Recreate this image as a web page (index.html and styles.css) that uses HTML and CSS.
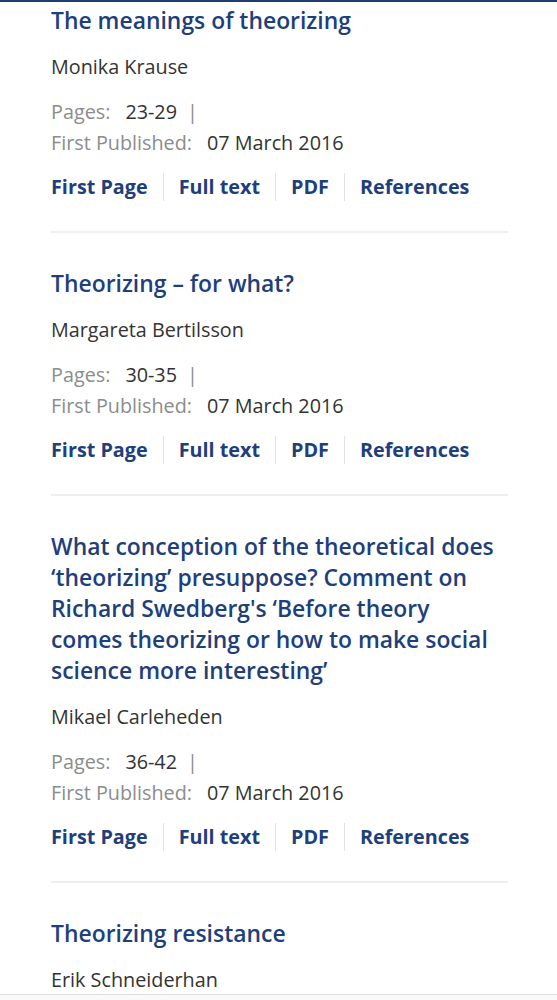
FILE: index.html
```html
<!DOCTYPE html>
<html>
<head>
<meta charset="utf-8">
<link rel="stylesheet" href="styles.css">
</head>
<body>
<div class="topbar"></div>
<main class="list">
  <article class="item">
    <h2 class="title">The meanings of theorizing</h2>
    <div class="author">Monika Krause</div>
    <div class="meta">
      <div class="row"><span class="label">Pages:</span><span class="value">23-29</span><span class="pipe">|</span></div>
      <div class="row"><span class="label">First Published:</span><span class="value">07 March 2016</span></div>
    </div>
    <nav class="links"><a>First Page</a><a>Full text</a><a>PDF</a><a>References</a></nav>
  </article>
  <article class="item">
    <h2 class="title">Theorizing – for what?</h2>
    <div class="author">Margareta Bertilsson</div>
    <div class="meta">
      <div class="row"><span class="label">Pages:</span><span class="value">30-35</span><span class="pipe">|</span></div>
      <div class="row"><span class="label">First Published:</span><span class="value">07 March 2016</span></div>
    </div>
    <nav class="links"><a>First Page</a><a>Full text</a><a>PDF</a><a>References</a></nav>
  </article>
  <article class="item">
    <h2 class="title">What conception of the theoretical does ‘theorizing’ presuppose? Comment on Richard Swedberg's ‘Before theory comes theorizing or how to make social science more interesting’</h2>
    <div class="author">Mikael Carleheden</div>
    <div class="meta">
      <div class="row"><span class="label">Pages:</span><span class="value">36-42</span><span class="pipe">|</span></div>
      <div class="row"><span class="label">First Published:</span><span class="value">07 March 2016</span></div>
    </div>
    <nav class="links"><a>First Page</a><a>Full text</a><a>PDF</a><a>References</a></nav>
  </article>
  <article class="item">
    <h2 class="title">Theorizing resistance</h2>
    <div class="author">Erik Schneiderhan</div>
  </article>
</main>
<div class="bottombar"></div>
</body>
</html>
```
FILE: styles.css
```css
html, body {
  margin: 0;
  padding: 0;
  background: #fff;
}
body {
  font-family: "Open Sans", "Noto Sans", sans-serif;
  color: #333;
}
.topbar {
  height: 2px;
  background: #1e3d72;
}
.list {
  padding: 0 49px 0 51px;
}
.item {
  padding: 3px 0 28px;
  border-bottom: 2px solid #efefef;
}
.item + .item {
  padding-top: 35px;
}
.title {
  margin: 0;
  padding-right: 8px;
  font-size: 22.9px;
  line-height: 31px;
  font-weight: 580;
  color: #1e3f7c;
}
.author {
  margin-top: 15px;
  font-size: 19.8px;
  line-height: 31px;
  color: #333;
}
.meta {
  margin-top: 14px;
  font-size: 19.8px;
  line-height: 31px;
}
.row {
  display: flex;
  align-items: baseline;
}
.label {
  color: #8c8c8c;
}
.value {
  margin-left: 15px;
  color: #333;
}
.pipe {
  margin-left: 10px;
  color: #8c8c8c;
}
.links {
  margin-top: 13px;
  display: flex;
  align-items: center;
  height: 31px;
  font-size: 19.8px;
  font-weight: 700;
  line-height: 28px;
  color: #1e3f7c;
}
.links a {
  padding: 0 15px;
  border-left: 1px solid #e2e2e2;
}
.links a:first-child {
  padding-left: 0;
  border-left: none;
}
.item:first-child .links,
.item .links {
  margin-bottom: 1px;
}
.item:last-child {
  border-bottom: none;
}
.bottombar {
  position: fixed;
  left: 0;
  right: 0;
  bottom: 0;
  height: 5px;
  background: #fafafa;
  border-top: 1px solid #dcdcdc;
}
```
